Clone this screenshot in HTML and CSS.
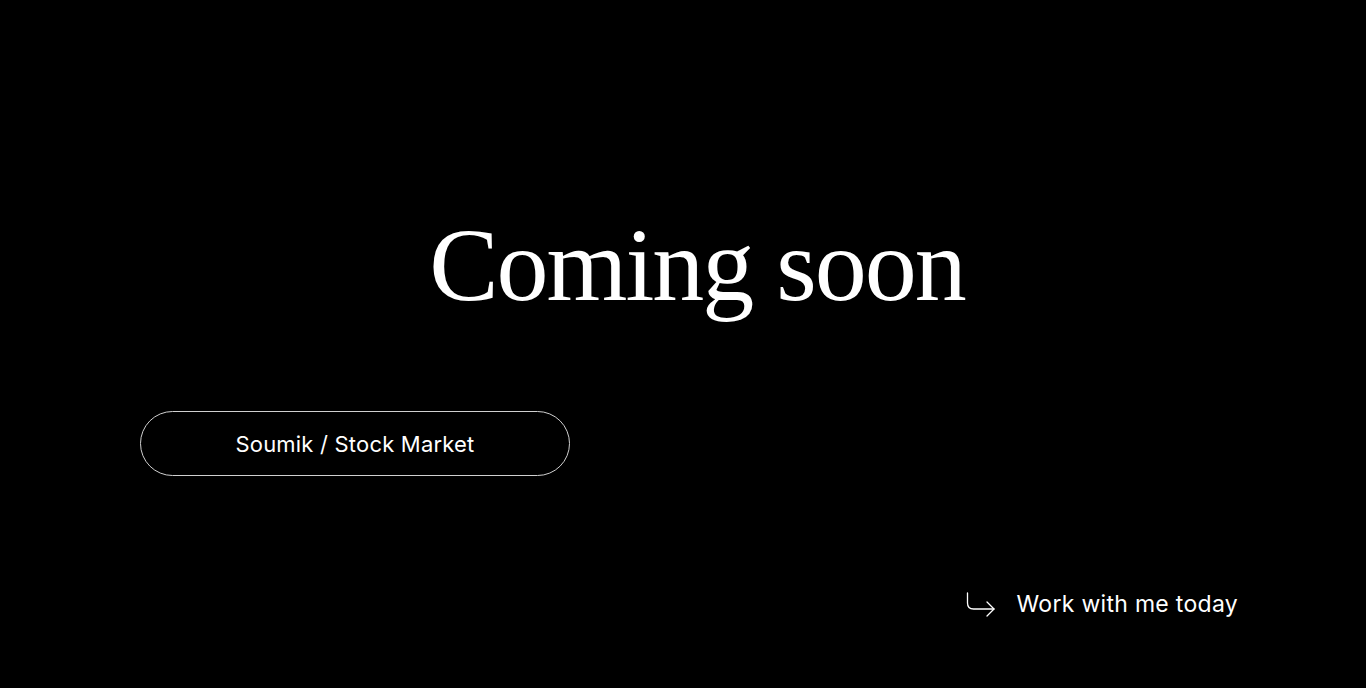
FILE: index.html
```html
<!DOCTYPE html>
<html lang="en">
<head>
<meta charset="utf-8">
<title>Coming soon</title>
<link rel="stylesheet" href="styles.css">
</head>
<body>
<main class="page">
  <h1 class="title">Coming soon</h1>
  <div class="pill-row">
    <a class="pill" href="#">Soumik / Stock Market</a>
  </div>
  <div class="cta-row">
    <a class="cta" href="#">
      <svg class="cta-icon" width="32" height="26" viewBox="0 0 32 26" fill="none" stroke="#fff" stroke-width="1.3" stroke-linecap="round" stroke-linejoin="round">
        <path d="M2.5 2 V12 Q2.5 18 8.5 18 H29"/>
        <path d="M22 11 L29 18 L22 25"/>
      </svg>
      <span>Work with me today</span>
    </a>
  </div>
</main>
</body>
</html>
```

FILE: styles.css
```css
* { box-sizing: border-box; }
html, body {
  margin: 0;
  background: #000;
  color: #fff;
}
.page {
  height: 688px;
  display: flex;
  flex-direction: column;
  padding: 208px 128px 0 140px;
}
.title {
  margin: 0;
  text-align: center;
  font-family: "Liberation Serif", serif;
  font-weight: 400;
  font-size: 104px;
  line-height: 114px;
  letter-spacing: -2px;
  padding-left: 16px;
}
.pill-row {
  margin-top: 89px;
  display: flex;
}
.pill {
  width: 430px;
  height: 65px;
  border: 1px solid #d0d0d0;
  border-radius: 33px;
  display: flex;
  align-items: center;
  justify-content: center;
  color: #fff;
  text-decoration: none;
  font-family: Inter, "Liberation Sans", sans-serif;
  font-size: 22px;
  letter-spacing: 0.2px;
}
.cta-row {
  margin-top: 114px;
  display: flex;
  justify-content: flex-end;
}
.cta {
  display: flex;
  align-items: center;
  gap: 20px;
  color: #fff;
  text-decoration: none;
  font-family: Inter, "Liberation Sans", sans-serif;
  font-size: 23px;
  letter-spacing: 0.3px;
}
.cta-icon { display: block; }
```
